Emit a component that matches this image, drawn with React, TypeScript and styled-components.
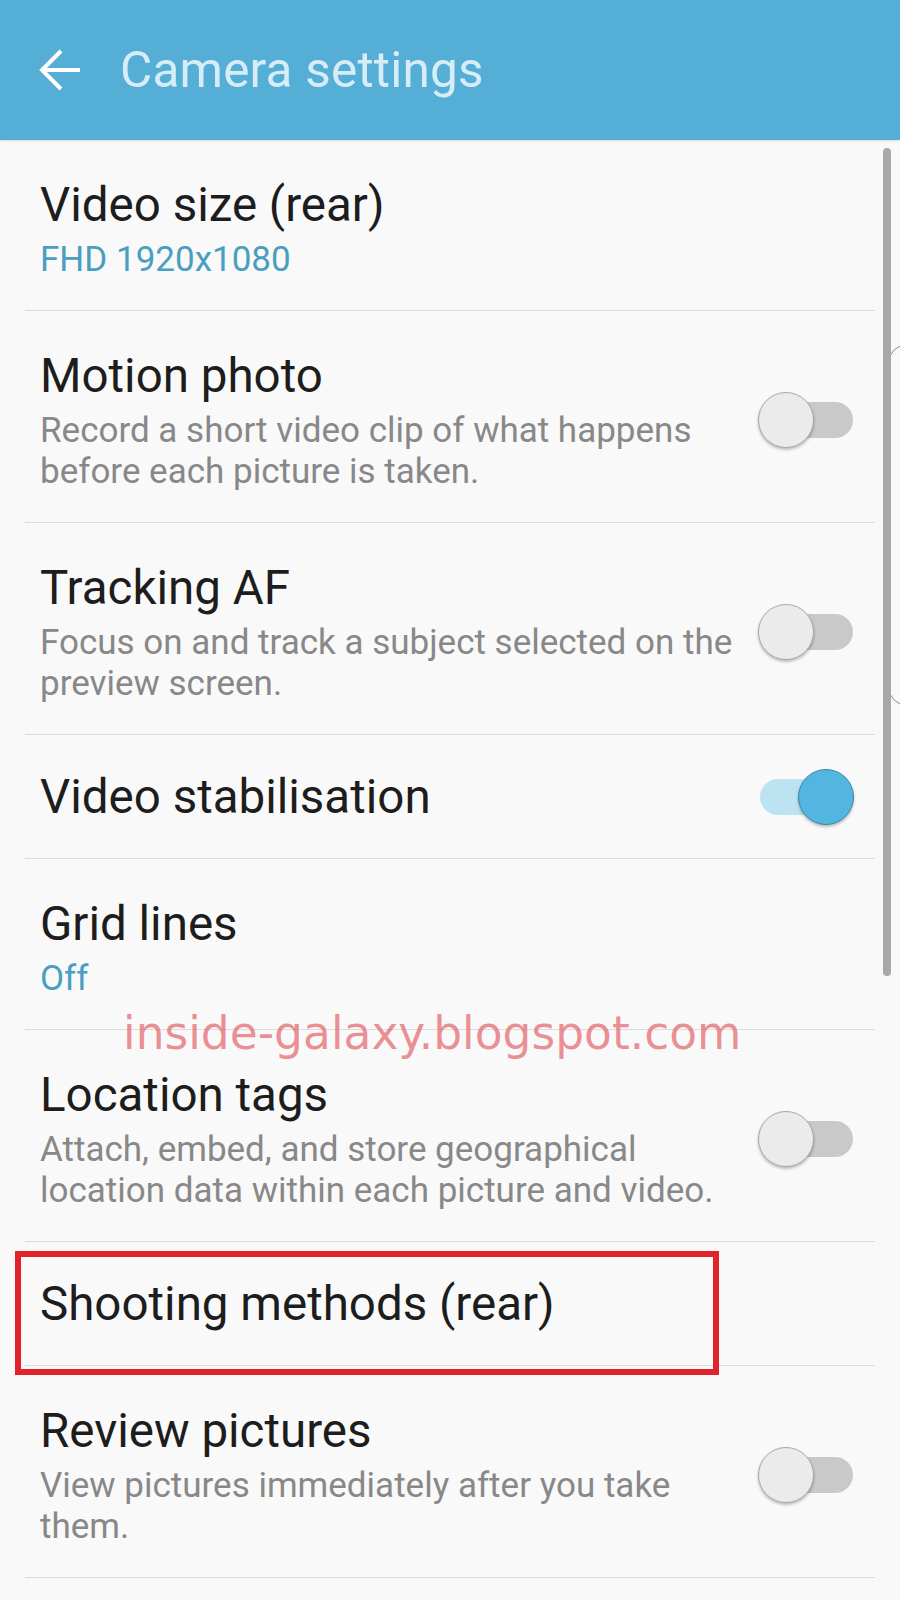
import React from "react";
import styled, { createGlobalStyle } from "styled-components";

type Setting = {
  title: string;
  value?: string;
  description?: string;
  toggle?: boolean;
};

const settings: Setting[] = [
  { title: "Video size (rear)", value: "FHD 1920x1080" },
  {
    title: "Motion photo",
    description: "Record a short video clip of what happens\nbefore each picture is taken.",
    toggle: false,
  },
  {
    title: "Tracking AF",
    description: "Focus on and track a subject selected on the\npreview screen.",
    toggle: false,
  },
  { title: "Video stabilisation", toggle: true },
  { title: "Grid lines", value: "Off" },
  {
    title: "Location tags",
    description: "Attach, embed, and store geographical\nlocation data within each picture and video.",
    toggle: false,
  },
  { title: "Shooting methods (rear)" },
  {
    title: "Review pictures",
    description: "View pictures immediately after you take\nthem.",
    toggle: false,
  },
];

const GlobalStyle = createGlobalStyle`
  html, body {
    margin: 0;
    padding: 0;
    background: #f9f9f9;
  }
  body {
    font-family: Roboto, "Noto Sans", "Liberation Sans", sans-serif;
  }
`;

const Screen = styled.div`
  position: relative;
  width: 900px;
  height: 1600px;
  overflow: hidden;
  background: #f9f9f9;
`;

const Header = styled.header`
  display: flex;
  align-items: center;
  height: 140px;
  padding-left: 38px;
  box-sizing: border-box;
  background: #54aed6;
  box-shadow: 0 1px 2px rgba(0, 0, 0, 0.12);
`;

const BackButton = styled.button`
  display: flex;
  align-items: center;
  justify-content: center;
  width: 44px;
  height: 44px;
  padding: 0;
  border: none;
  background: transparent;
  margin-right: 38px;
`;

const HeaderTitle = styled.h1`
  margin: 0;
  font-size: 49.5px;
  font-weight: 400;
  line-height: 56px;
  color: #d6edf7;
  letter-spacing: 0.2px;
`;

const List = styled.div`
  display: flex;
  flex-direction: column;
`;

const Row = styled.div<{ $compact: boolean }>`
  display: flex;
  align-items: center;
  margin: 0 25px;
  padding: ${(p) => (p.$compact ? "34px 0 33px" : "37px 0 30px")};
  border-bottom: 1px solid #dddddd;
`;

const TextBlock = styled.div`
  flex: 1;
  display: flex;
  flex-direction: column;
  gap: 6px;
  padding-left: 15px;
`;

const Title = styled.div`
  font-size: 47.5px;
  line-height: 56px;
  color: #1d1d1d;
`;

const SubText = styled.div<{ $accent: boolean }>`
  font-size: 35px;
  line-height: 41px;
  white-space: pre-line;
  color: ${(p) => (p.$accent ? "#4a9ec0" : "#888888")};
`;

const Switch = styled.div`
  position: relative;
  flex: none;
  width: 96px;
  height: 56px;
  margin-right: 21px;
`;

const Track = styled.div<{ $on: boolean }>`
  position: absolute;
  left: 2px;
  right: 1px;
  top: 10px;
  height: 36px;
  border-radius: 18px;
  background: ${(p) => (p.$on ? "#bde3f2" : "#c9c9c9")};
`;

const Thumb = styled.div<{ $on: boolean }>`
  position: absolute;
  top: 0;
  ${(p) => (p.$on ? "right: 0;" : "left: 0;")}
  width: 56px;
  height: 56px;
  box-sizing: border-box;
  border-radius: 50%;
  background: ${(p) => (p.$on ? "#52b6e1" : "#ebebeb")};
  border: 1.5px solid ${(p) => (p.$on ? "#3b87a9" : "#a9a9a9")};
  box-shadow: 0 2px 3px rgba(0, 0, 0, 0.25);
`;

const Scrollbar = styled.div`
  position: absolute;
  left: 883px;
  top: 148px;
  width: 8px;
  height: 828px;
  border-radius: 4px;
  background: #a8a8a8;
`;

const EdgeHandle = styled.div`
  position: absolute;
  left: 889px;
  top: 345px;
  width: 40px;
  height: 360px;
  box-sizing: border-box;
  border: 1.5px solid #8c8c8c;
  border-radius: 16px;
`;

const Watermark = styled.div`
  position: absolute;
  left: 123px;
  top: 1012px;
  font-family: "DejaVu Sans", Verdana, sans-serif;
  font-size: 45.5px;
  line-height: 44px;
  color: rgba(228, 104, 110, 0.72);
  white-space: nowrap;
`;

const Highlight = styled.div`
  position: absolute;
  left: 15px;
  top: 1251px;
  width: 704px;
  height: 124px;
  box-sizing: border-box;
  border: 6px solid #e1242b;
`;

const BackArrow = () => (
  <svg width="44" height="44" viewBox="0 0 44 44" fill="none">
    <path
      d="M42 22H4M23 3L4 22l19 19"
      stroke="#ffffff"
      strokeWidth="4"
      strokeLinecap="butt"
      strokeLinejoin="miter"
    />
  </svg>
);

const Toggle = ({ on }: { on: boolean }) => (
  <Switch>
    <Track $on={on} />
    <Thumb $on={on} />
  </Switch>
);

export default function App() {
  return (
    <>
      <GlobalStyle />
      <Screen>
        <Header>
          <BackButton aria-label="Back">
            <BackArrow />
          </BackButton>
          <HeaderTitle>Camera settings</HeaderTitle>
        </Header>
        <List>
          {settings.map((s) => (
            <Row key={s.title} $compact={!s.value && !s.description}>
              <TextBlock>
                <Title>{s.title}</Title>
                {s.value && <SubText $accent>{s.value}</SubText>}
                {s.description && <SubText $accent={false}>{s.description}</SubText>}
              </TextBlock>
              {s.toggle !== undefined && <Toggle on={s.toggle} />}
            </Row>
          ))}
        </List>
        <EdgeHandle />
        <Scrollbar />
        <Watermark>inside-galaxy.blogspot.com</Watermark>
        <Highlight />
      </Screen>
    </>
  );
}
